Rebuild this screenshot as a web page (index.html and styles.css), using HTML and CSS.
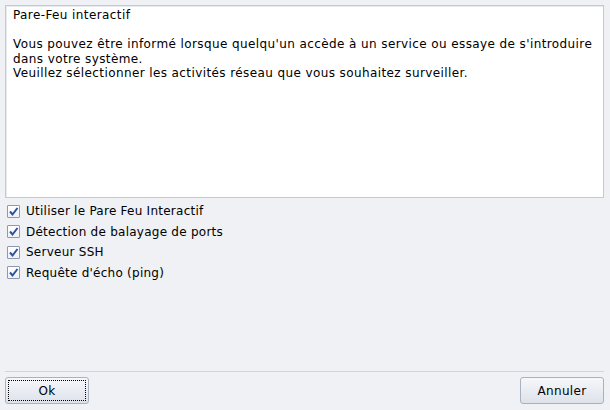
FILE: index.html
```html
<!DOCTYPE html>
<html lang="fr">
<head>
<meta charset="utf-8">
<link rel="stylesheet" href="styles.css">
</head>
<body>
<div class="dialog">
  <div class="textbox">
    <p>Pare-Feu interactif</p>
    <p>&nbsp;</p>
    <p>Vous pouvez être informé lorsque quelqu'un accède à un service ou essaye de s'introduire dans votre système.</p>
    <p>Veuillez sélectionner les activités réseau que vous souhaitez surveiller.</p>
  </div>
  <div class="checks">
    <label class="check"><span class="box"><svg viewBox="0 0 13 13" width="13" height="13"><path d="M3 6.5 L5.5 9.5 L10.5 3" fill="none" stroke="#2f4f9f" stroke-width="2"/></svg></span>Utiliser le Pare Feu Interactif</label>
    <label class="check"><span class="box"><svg viewBox="0 0 13 13" width="13" height="13"><path d="M3 6.5 L5.5 9.5 L10.5 3" fill="none" stroke="#2f4f9f" stroke-width="2"/></svg></span>Détection de balayage de ports</label>
    <label class="check"><span class="box"><svg viewBox="0 0 13 13" width="13" height="13"><path d="M3 6.5 L5.5 9.5 L10.5 3" fill="none" stroke="#2f4f9f" stroke-width="2"/></svg></span>Serveur SSH</label>
    <label class="check"><span class="box"><svg viewBox="0 0 13 13" width="13" height="13"><path d="M3 6.5 L5.5 9.5 L10.5 3" fill="none" stroke="#2f4f9f" stroke-width="2"/></svg></span>Requête d'écho (ping)</label>
  </div>
  <div class="spacer"></div>
  <div class="sep"></div>
  <div class="buttons">
    <button class="btn focus"><span>Ok</span></button>
    <button class="btn"><span>Annuler</span></button>
  </div>
</div>
</body>
</html>
```
FILE: styles.css
```css
html, body {
  margin: 0;
  padding: 0;
  background: #eff1f5;
}
body {
  font-family: "DejaVu Sans", sans-serif;
  font-size: 12px;
  color: #000;
}
.dialog {
  width: 610px;
  height: 410px;
  box-sizing: border-box;
  padding: 5px 6px 6px 5px;
  display: flex;
  flex-direction: column;
}
.textbox {
  height: 193px;
  box-sizing: border-box;
  background: #fff;
  border: 1px solid #c3cad6;
  box-shadow: inset 1px 1px 0 #e6eaf0;
  padding: 2px 7px;
  line-height: 14.5px;
  letter-spacing: 0.4px;
}
.textbox p {
  margin: 0;
}
.checks {
  display: flex;
  flex-direction: column;
  padding-top: 3px;
  letter-spacing: 0.25px;
}
.check {
  display: flex;
  align-items: center;
  height: 20.5px;
  padding-left: 2px;
  gap: 6px;
}
.box {
  width: 13px;
  height: 13px;
  box-sizing: border-box;
  border: 1px solid #8e9aab;
  background: linear-gradient(#ffffff, #eef1f6);
  border-radius: 1px;
  display: flex;
  align-items: center;
  justify-content: center;
}
.box svg {
  display: block;
  flex: none;
}
.spacer {
  flex: 1;
}
.sep {
  height: 1px;
  background: #cfd5de;
  margin-bottom: 5px;
}
.buttons {
  display: flex;
  justify-content: space-between;
}
.btn {
  width: 84px;
  height: 27px;
  border: 1px solid #a9b2c0;
  border-radius: 3px;
  background: linear-gradient(#f6f7fa, #dde2ea);
  font-family: "DejaVu Sans", sans-serif;
  font-size: 12px;
  letter-spacing: 0.3px;
  color: #000;
  padding: 2px;
  display: flex;
}
.btn span {
  flex: 1;
  display: flex;
  align-items: center;
  justify-content: center;
  border: 1px dotted transparent;
}
.btn.focus span {
  border: 1px dotted #000;
}
```
